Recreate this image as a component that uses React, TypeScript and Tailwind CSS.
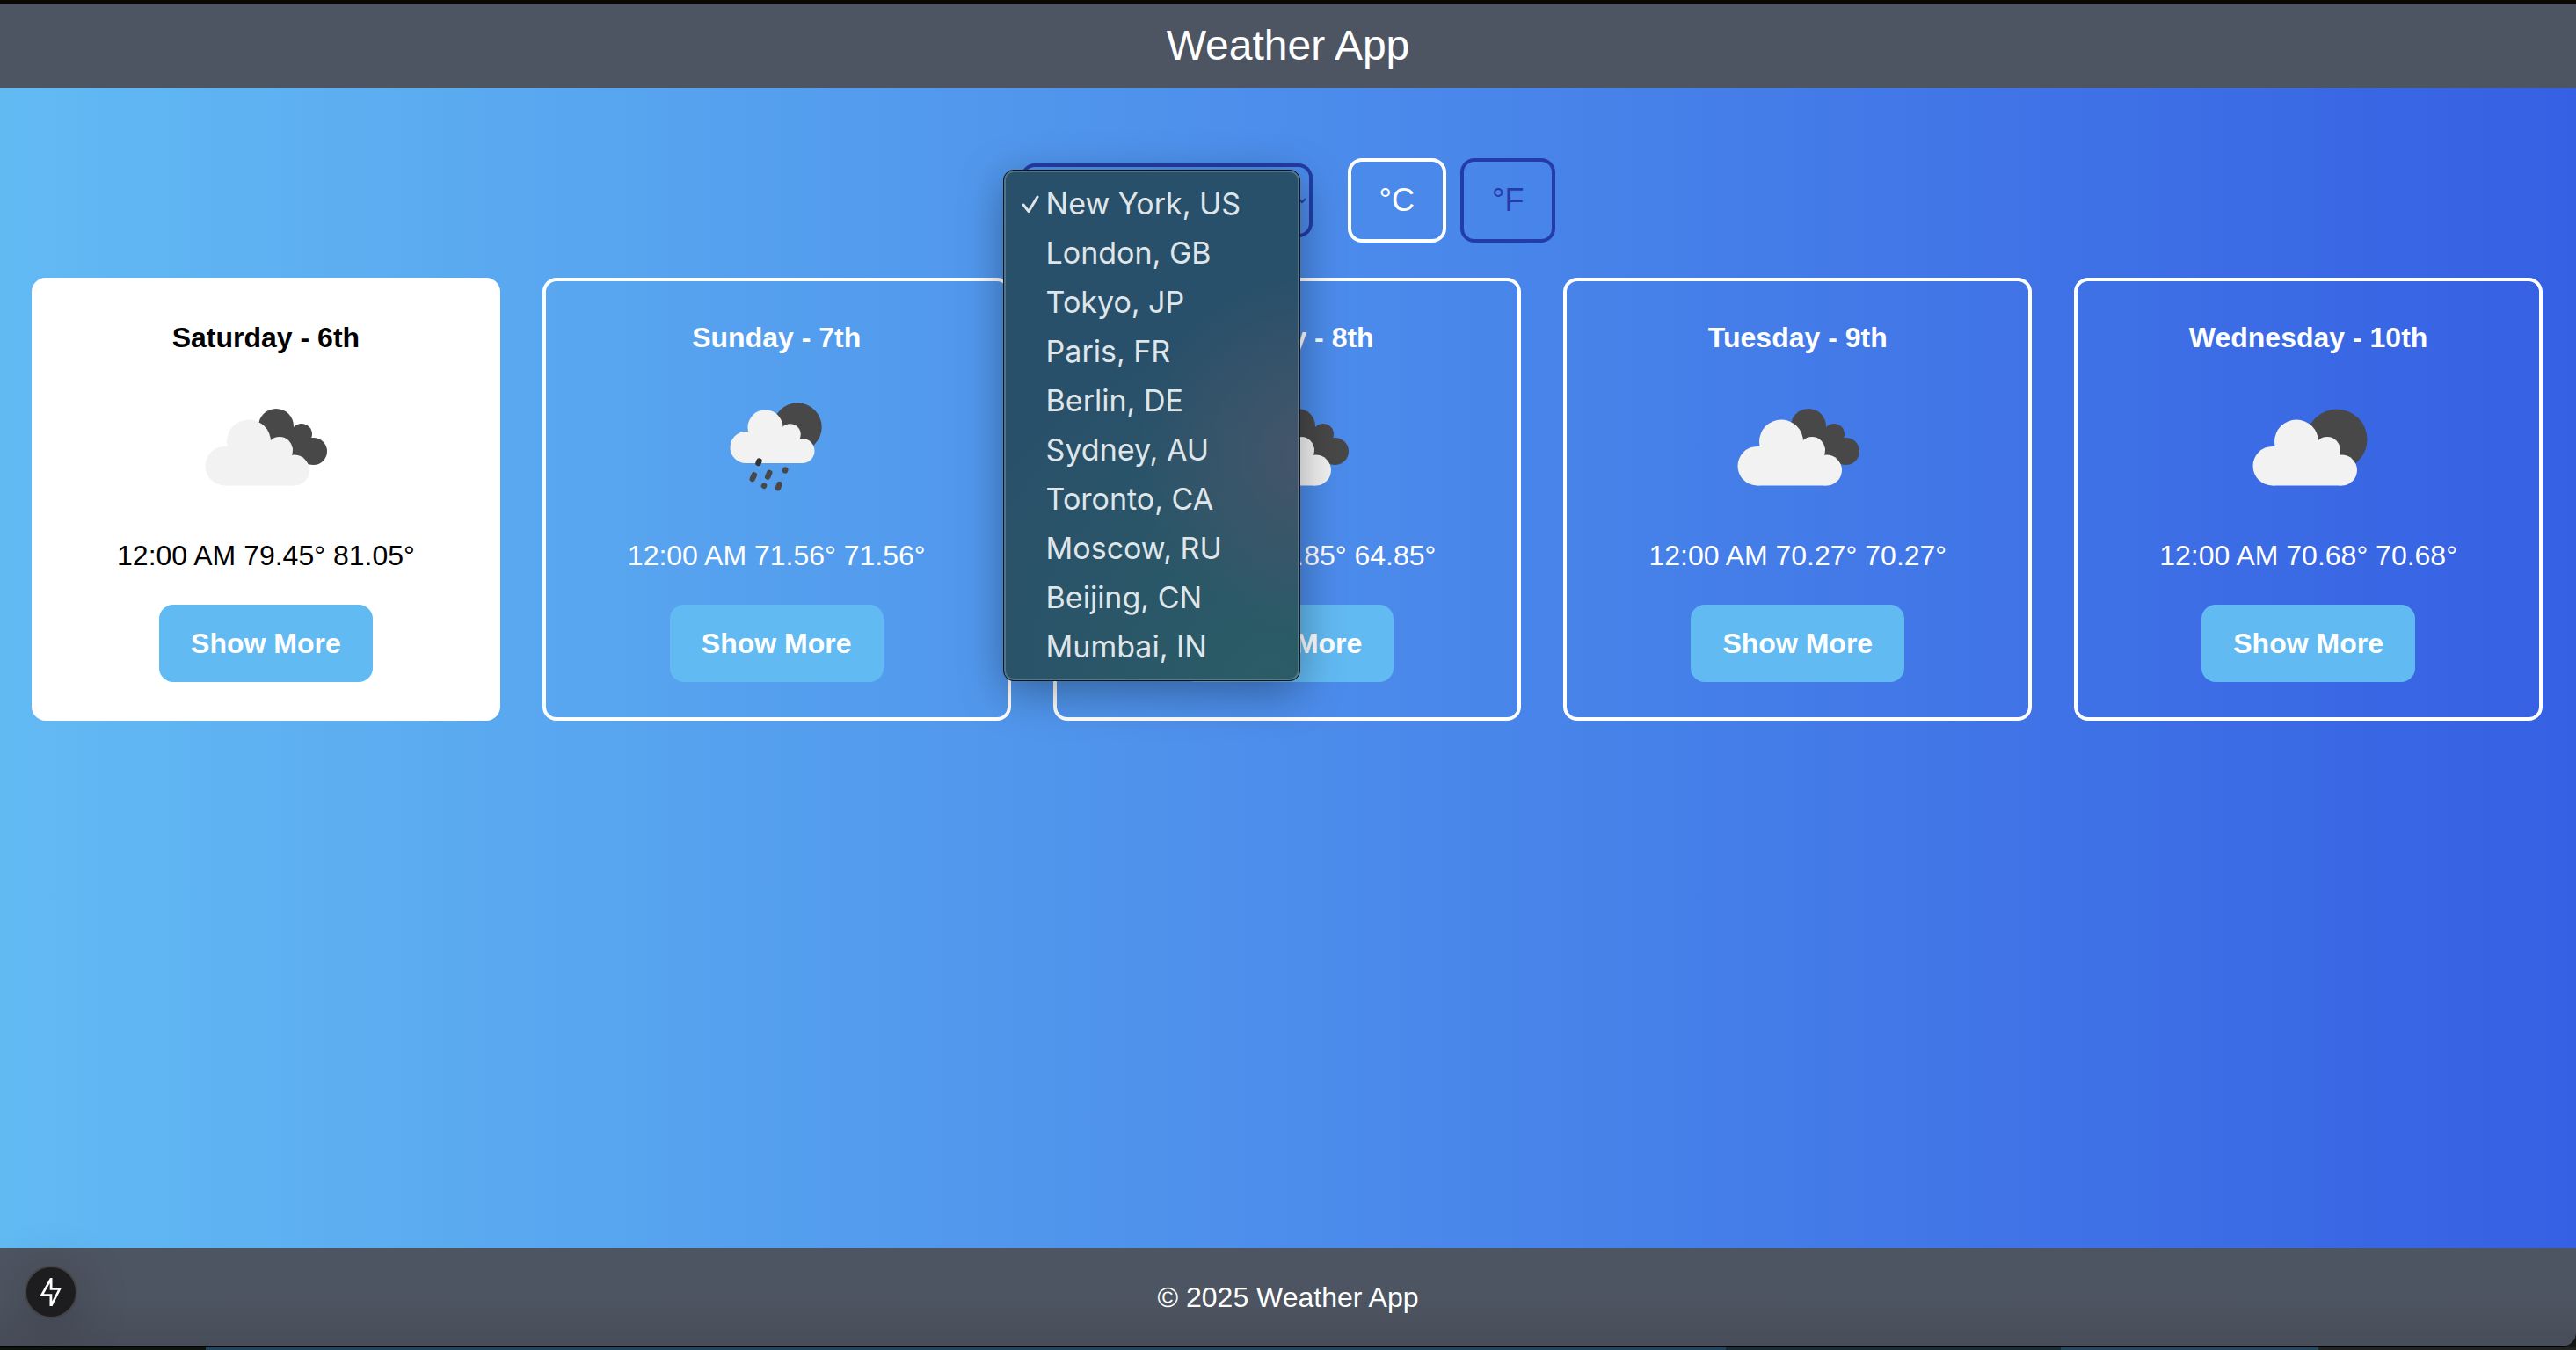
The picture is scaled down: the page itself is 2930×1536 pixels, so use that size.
import { useState } from "react";

type Sky = "clouds" | "rain" | "night";

const forecast: { day: string; sky: Sky; temps: string }[] = [
  { day: "Saturday - 6th", sky: "clouds", temps: "12:00 AM 79.45° 81.05°" },
  { day: "Sunday - 7th", sky: "rain", temps: "12:00 AM 71.56° 71.56°" },
  { day: "Monday - 8th", sky: "clouds", temps: "12:00 AM 64.85° 64.85°" },
  { day: "Tuesday - 9th", sky: "clouds", temps: "12:00 AM 70.27° 70.27°" },
  { day: "Wednesday - 10th", sky: "night", temps: "12:00 AM 70.68° 70.68°" },
];

const cities = [
  "New York, US",
  "London, GB",
  "Tokyo, JP",
  "Paris, FR",
  "Berlin, DE",
  "Sydney, AU",
  "Toronto, CA",
  "Moscow, RU",
  "Beijing, CN",
  "Mumbai, IN",
];

function SkyIcon({ sky }: { sky: Sky }) {
  if (sky === "rain") {
    return (
      <svg viewBox="0 0 200 200" className="size-[200px]" aria-hidden="true">
        <circle cx="124" cy="78" r="27.700" fill="#484848" />
        <g fill="#f2f2f2">
          <circle cx="65.500" cy="101" r="18" />
          <circle cx="87.500" cy="78.300" r="20" />
          <circle cx="115.700" cy="86.300" r="12" />
          <circle cx="129.500" cy="105" r="14" />
          <path d="M65.500 83H72L107 78L120 92L129.500 91V119H65.500Z" />
        </g>
        <g stroke="#484848" strokeWidth="6.500" strokeLinecap="round">
          <path d="M79.500 119l1-2.500" stroke="#333" />
          <path d="M74.800 132.500l-2 4.500M92.200 130l-2 4.500M110 127.500l.300-1M86 144.800l.1-.2M103.700 143l-1.800 4.200" />
        </g>
      </svg>
    );
  }
  return (
    <svg viewBox="0 0 200 200" className="size-[200px]" aria-hidden="true">
      {sky === "night" ? (
        <circle cx="132" cy="92" r="34.500" fill="#484848" />
      ) : (
        <g fill="#484848">
          <circle cx="112" cy="77" r="20" />
          <circle cx="141" cy="86" r="12" />
          <circle cx="154.500" cy="105.500" r="15.500" />
          <path d="M100 90L131.500 78L152.500 91L150 120H130Z" />
        </g>
      )}
      <g fill="#f2f2f2" transform={sky === "night" ? "translate(5 0)" : undefined}>
        <circle cx="53.800" cy="122.200" r="22.300" />
        <circle cx="81" cy="94.500" r="25" />
        <circle cx="116" cy="104" r="15" />
        <circle cx="132.500" cy="127" r="17.500" />
        <path d="M53.800 100H58L106 94L120 112L132.500 110V144.500H53.800Z" />
      </g>
    </svg>
  );
}

export default function App() {
  const [unit, setUnit] = useState("C");
  const [city, setCity] = useState(cities[0]);

  return (
    <div className="flex min-h-screen flex-col border-t-4 border-[#0b0804] bg-linear-to-r/srgb from-[#62baf3] to-[#3660e3] font-['Liberation_Sans',Arial,sans-serif] text-[32px] leading-12 text-white">
      <header className="bg-[#4e5562] py-4 text-center">
        <h1 className="text-[48px] leading-16">Weather App</h1>
      </header>

      <main className="flex grow flex-col gap-10 px-9 pt-20">
        <div className="flex items-center justify-center gap-10">
          <div className="relative">
            <select
              aria-label="City"
              value={city}
              onChange={(e) => setCity(e.target.value)}
              className="block h-[84px] w-[332px] rounded-2xl border-4 border-[#243ca8] bg-transparent px-4 text-[#243ca8]"
            >
              {cities.map((c) => (
                <option key={c}>{c}</option>
              ))}
            </select>
            <div
              role="listbox"
              aria-label="Cities"
              className="absolute top-[7px] -left-5 z-10 w-[338px] rounded-xl border border-[#0c151d] bg-[#29506a] bg-[radial-gradient(circle_at_105%_56%,#46556a_0,transparent_42%),radial-gradient(circle_at_90%_100%,#2b5c66_0,transparent_60%)] px-1 py-2.5 font-[Inter,sans-serif] text-[34px] leading-14 text-[#dfe5e9] shadow-[0_12px_50px_rgba(0,0,0,0.35),inset_0_0_0_2px_rgba(255,255,255,0.2)]"
            >
              {cities.map((c) => (
                <button
                  key={c}
                  type="button"
                  role="option"
                  aria-selected={c === city}
                  onClick={() => setCity(c)}
                  className="flex w-full items-center pl-4 text-left whitespace-nowrap"
                >
                  <span className="w-7 shrink-0">
                    {c === city && (
                      <svg viewBox="0 0 20 20" className="size-5" fill="none" stroke="currentColor" strokeWidth="3" strokeLinecap="round" strokeLinejoin="round" aria-hidden="true">
                        <path d="M2 11l6 7.500L18 2" />
                      </svg>
                    )}
                  </span>
                  {c}
                </button>
              ))}
            </div>
          </div>
          <div className="flex gap-4 text-[36px] leading-14">
            {["C", "F"].map((u) => (
              <button
                key={u}
                type="button"
                onClick={() => setUnit(u)}
                className={`rounded-2xl border-4 px-8 py-4 ${unit === u ? "border-white text-white" : "border-[#243ca8] text-[#243ca8]"}`}
              >
                °{u}
              </button>
            ))}
          </div>
        </div>

        <div className="grid grid-cols-5 gap-12 pr-0.5">
          {forecast.map((f, i) => (
            <section
              key={f.day}
              className={`flex flex-col items-center rounded-2xl border-4 border-white p-10 ${i === 0 ? "bg-white text-black" : ""}`}
            >
              <h2 className="font-bold">{f.day}</h2>
              <SkyIcon sky={f.sky} />
              <p>{f.temps}</p>
              <button type="button" className="mt-8 rounded-2xl bg-[#62baf3] px-9 py-5 font-bold text-white">
                Show More
              </button>
            </section>
          ))}
        </div>
      </main>

      <div className="bg-[#141614]">
        <footer className="rounded-br-2xl border-b border-black bg-linear-to-b from-[#4e5562] from-50% to-[#474d58] py-8 text-center">
          <p>© 2025 Weather App</p>
        </footer>
        <div className="flex h-[3px]">
          <div className="w-[8%] bg-[#0c160e]" />
          <div className="w-[59%] bg-[#1f4560]" />
          <div className="w-[13%] bg-[#182c38]" />
          <div className="w-[10%] bg-[#26475f]" />
          <div className="grow bg-[#20231f]" />
        </div>
      </div>

      <button
        type="button"
        aria-label="Open developer tools"
        className="fixed bottom-9 left-7 flex size-[60px] items-center justify-center rounded-full border-2 border-[#444447] bg-[#1d1d1f] shadow-[0_8px_60px_rgba(0,0,0,0.25)]"
      >
        <svg viewBox="0 0 26 32" className="h-8 w-[26px]" fill="white" fillRule="evenodd" aria-hidden="true">
          <path d="M12 0h2.500v11.300H25L14.500 32h-3V20.700H.300ZM11.700 6 4.800 18.200h9.500v8.300L20.800 13.800h-9.100Z" />
        </svg>
      </button>
    </div>
  );
}
